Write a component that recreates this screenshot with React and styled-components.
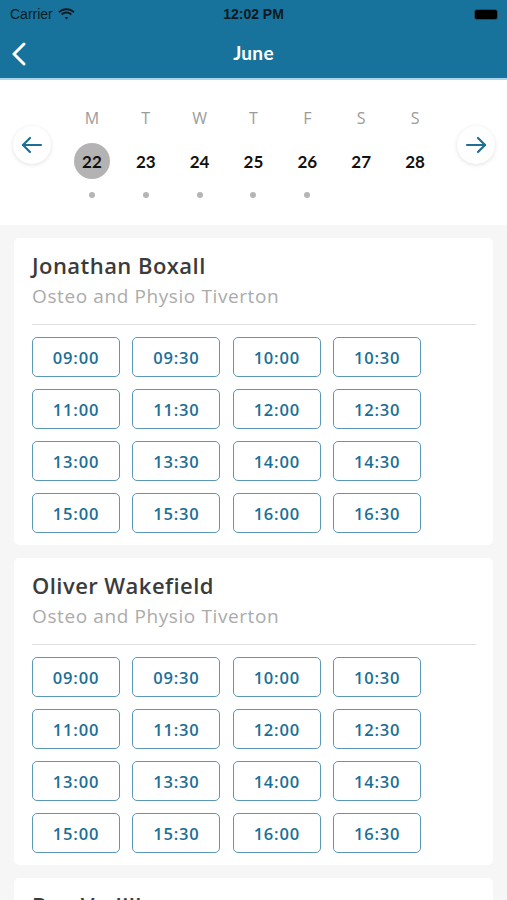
import React from "react";
import styled, { createGlobalStyle } from "styled-components";

const Global = createGlobalStyle`
  html, body { margin: 0; padding: 0; }
  body {
    background: #f6f6f6;
    font-family: "Open Sans", Lato, sans-serif;
    width: 507px;
    overflow: hidden;
  }
`;

const Header = styled.header`
  background: #17739b;
  border-bottom: 2px solid #a7d7ee;
`;

const StatusBar = styled.div`
  height: 28px;
  display: flex;
  align-items: center;
  justify-content: space-between;
  padding: 0 9px 0 10px;
  font-family: "Liberation Sans", Arial, sans-serif;
  font-size: 14px;
  color: #0d1a22;
  position: relative;
`;

const Carrier = styled.div`
  display: flex;
  align-items: center;
  gap: 5px;
`;

const Clock = styled.div`
  position: absolute;
  left: 0;
  right: 0;
  text-align: center;
  font-weight: 700;
  pointer-events: none;
`;

const Battery = styled.div`
  width: 22px;
  height: 9px;
  border-radius: 3px;
  background: #000;
  border: 1px solid #2c4a58;
  position: relative;
  &::after {
    content: "";
    position: absolute;
    right: -4px;
    top: 3px;
    width: 2px;
    height: 4px;
    border-radius: 0 1px 1px 0;
    background: #3d6678;
  }
`;

const NavBar = styled.div`
  height: 50px;
  display: flex;
  align-items: center;
  justify-content: center;
  position: relative;
`;

const BackButton = styled.button`
  position: absolute;
  left: 8px;
  top: 10px;
  background: none;
  border: none;
  padding: 4px;
  display: flex;
`;

const Title = styled.h1`
  margin: 0 0 2px;
  font-size: 19px;
  font-weight: 700;
  color: #fff;
  font-family: Lato, sans-serif;
  letter-spacing: 0.3px;
`;

const WeekBar = styled.section`
  background: #fff;
  height: 145px;
  display: flex;
  padding: 0 12px 0 13px;
  box-sizing: border-box;
`;

const ArrowButton = styled.button`
  width: 38px;
  height: 38px;
  border-radius: 50%;
  border: none;
  background: #fff;
  box-shadow: 0 1px 4px rgba(0, 0, 0, 0.12);
  margin-top: 46px;
  display: flex;
  align-items: center;
  justify-content: center;
  padding: 0;
  flex-shrink: 0;
`;

const Days = styled.div`
  flex: 1;
  display: grid;
  grid-template-columns: repeat(7, 1fr);
  margin: 0 15px 0 14px;
  padding-top: 28px;
`;

const Day = styled.div`
  display: flex;
  flex-direction: column;
  align-items: center;
`;

const DayLetter = styled.div`
  height: 20px;
  line-height: 20px;
  font-size: 16px;
  color: #9b9b9b;
  font-weight: 400;
`;

const DayNum = styled.div`
  margin-top: 15px;
  width: 36px;
  height: 36px;
  border-radius: 50%;
  display: flex;
  align-items: center;
  justify-content: center;
  font-family: Lato, sans-serif;
  font-size: 17px;
  font-weight: 700;
  color: #111;
  background: ${(p) => (p.$selected ? "#b3b3b3" : "transparent")};
`;

const Dot = styled.div`
  margin-top: 13px;
  width: 6px;
  height: 6px;
  border-radius: 50%;
  background: ${(p) => (p.$show ? "#b5b5b5" : "transparent")};
`;

const List = styled.main`
  padding: 13px 14px;
  display: flex;
  flex-direction: column;
  gap: 13px;
`;

const Card = styled.div`
  background: #fff;
  border-radius: 5px;
  padding: 13px 17px 12px 18px;
`;

const Name = styled.div`
  font-size: 22px;
  line-height: 28px;
  font-weight: 600;
  color: #3b3b3b;
  letter-spacing: 0.45px;
`;

const Clinic = styled.div`
  margin-top: 4px;
  font-size: 19px;
  line-height: 26px;
  color: #ababab;
  letter-spacing: 0.6px;
`;

const Divider = styled.hr`
  margin: 15px 0 12px;
  border: none;
  border-top: 1px solid #dedede;
`;

const Slots = styled.div`
  display: grid;
  grid-template-columns: repeat(4, 88px);
  column-gap: 12.4px;
  row-gap: 12px;
`;

const Slot = styled.button`
  height: 40px;
  box-sizing: border-box;
  border: 1.5px solid #5b98b7;
  border-radius: 5px;
  background: #fff;
  color: #1b6f96;
  font-family: "Open Sans", sans-serif;
  font-size: 16.5px;
  font-weight: 600;
  letter-spacing: 0.8px;
  padding: 0;
`;

const days = [
  ["M", 22, true, true],
  ["T", 23, false, true],
  ["W", 24, false, true],
  ["T", 25, false, true],
  ["F", 26, false, true],
  ["S", 27, false, false],
  ["S", 28, false, false],
];

const times = [
  "09:00", "09:30", "10:00", "10:30",
  "11:00", "11:30", "12:00", "12:30",
  "13:00", "13:30", "14:00", "14:30",
  "15:00", "15:30", "16:00", "16:30",
];

const practitioners = ["Jonathan Boxall", "Oliver Wakefield", "Ben Vadillo"];

const Arrow = ({ dir }) => (
  <svg width="22" height="18" viewBox="0 0 22 18" fill="none" stroke="#1f6f95" strokeWidth="2.2" strokeLinecap="round" strokeLinejoin="round">
    {dir === "left" ? (
      <>
        <path d="M20 9H2" />
        <path d="M9 2L2 9l7 7" />
      </>
    ) : (
      <>
        <path d="M2 9h18" />
        <path d="M13 2l7 7-7 7" />
      </>
    )}
  </svg>
);

export default function App() {
  return (
    <>
      <Global />
      <Header>
        <StatusBar>
          <Carrier>
            Carrier
            <svg width="17" height="12" viewBox="0 0 17 12">
              <path d="M8.5 2.2c2.6 0 5 1 6.8 2.7l1.3-1.4C14.4 1.4 11.6.2 8.5.2S2.6 1.4.4 3.5l1.3 1.4C3.5 3.2 5.9 2.2 8.5 2.2z" fill="#0d1a22" />
              <path d="M8.5 5.6c1.6 0 3.1.6 4.2 1.7l1.3-1.4C12.6 4.5 10.6 3.6 8.5 3.6S4.4 4.5 3 5.9l1.3 1.4C5.4 6.2 6.9 5.6 8.5 5.6z" fill="#0d1a22" />
              <path d="M8.5 8.9c.7 0 1.3.3 1.8.7l-1.8 2-1.8-2c.5-.4 1.1-.7 1.8-.7z" fill="#0d1a22" />
            </svg>
          </Carrier>
          <Clock>12:02 PM</Clock>
          <Battery />
        </StatusBar>
        <NavBar>
          <BackButton aria-label="Back">
            <svg width="14" height="24" viewBox="0 0 14 24" fill="none" stroke="#fff" strokeWidth="3" strokeLinecap="round" strokeLinejoin="round">
              <path d="M12 2L2 12l10 10" />
            </svg>
          </BackButton>
          <Title>June</Title>
        </NavBar>
      </Header>
      <WeekBar>
        <ArrowButton aria-label="Previous week">
          <Arrow dir="left" />
        </ArrowButton>
        <Days>
          {days.map(([l, n, sel, dot], i) => (
            <Day key={i}>
              <DayLetter>{l}</DayLetter>
              <DayNum $selected={sel}>{n}</DayNum>
              <Dot $show={dot} />
            </Day>
          ))}
        </Days>
        <ArrowButton aria-label="Next week">
          <Arrow dir="right" />
        </ArrowButton>
      </WeekBar>
      <List>
        {practitioners.map((p) => (
          <Card key={p}>
            <Name>{p}</Name>
            <Clinic>Osteo and Physio Tiverton</Clinic>
            <Divider />
            <Slots>
              {times.map((t) => (
                <Slot key={t}>{t}</Slot>
              ))}
            </Slots>
          </Card>
        ))}
      </List>
    </>
  );
}
